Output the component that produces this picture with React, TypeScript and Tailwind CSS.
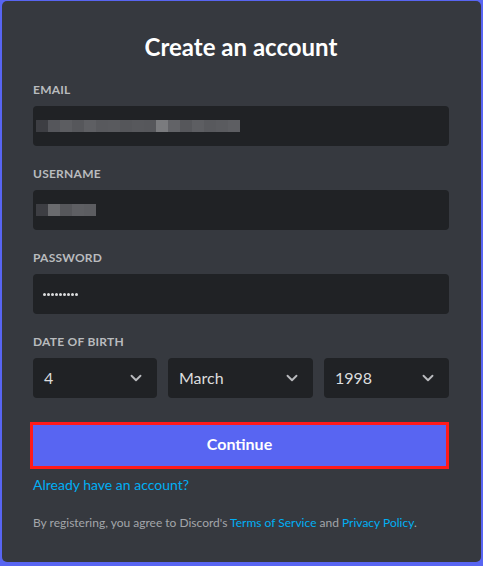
import { ChevronDown } from "lucide-react";

const emailBlocks = [
  "#3d3e43", "#55565b", "#5c5d61", "#56575b", "#5e5f63", "#58595d", "#595a5e", "#55565a",
  "#57585c", "#56575b", "#7a7b7e", "#626367", "#56575b", "#5d5e62", "#58595d", "#5a5b5f", "#5d5e62",
];
const userBlocks = ["#3d3e43", "#6a6b6e", "#56575b", "#5e5f63", "#5c5d61"];

function Label({ children }: { children: React.ReactNode }) {
  return (
    <div className="mb-2 h-4 text-[12px] font-bold leading-4 tracking-[0.02em] text-[#b9bbbe] uppercase">
      {children}
    </div>
  );
}

function Mosaic({ blocks }: { blocks: string[] }) {
  return (
    <div className="ml-[3px] flex h-3">
      {blocks.map((c, i) => (
        <span key={i} className="h-3 w-3" style={{ backgroundColor: c }} />
      ))}
    </div>
  );
}

function Select({ value, width }: { value: string; width: string }) {
  return (
    <div
      className={`flex h-10 items-center justify-between rounded-[4px] bg-[#202225] pl-[11px] pr-3 ${width}`}
    >
      <span className="text-[16px] text-[#dcddde]">{value}</span>
      <ChevronDown size={18} strokeWidth={2.5} className="text-[#b9bbbe]" />
    </div>
  );
}

export default function App() {
  return (
    <div
      className="h-[566px] w-[483px] overflow-hidden bg-[#5865f2] pl-[2px] pt-px"
      style={{ fontFamily: 'Lato, "Noto Sans", sans-serif' }}
    >
      <div className="h-[561px] w-[479px] rounded-[5px] bg-[#36393f] pl-[31px] pr-[32px] pt-[31px]">
        <h1 className="h-[30px] text-center text-[24px] font-bold leading-[30px] text-white">
          Create an account
        </h1>

        <div className="mt-5">
          <Label>Email</Label>
          <div className="flex h-10 items-center rounded-[4px] bg-[#202225]">
            <Mosaic blocks={emailBlocks} />
          </div>
        </div>

        <div className="mt-5">
          <Label>Username</Label>
          <div className="flex h-10 items-center rounded-[4px] bg-[#202225]">
            <Mosaic blocks={userBlocks} />
          </div>
        </div>

        <div className="mt-5">
          <Label>Password</Label>
          <div className="flex h-10 items-center gap-px rounded-[4px] bg-[#202225] pl-[10px]">
            {Array.from({ length: 9 }).map((_, i) => (
              <span key={i} className="h-[3px] w-[3px] rounded-full bg-[#dcddde]" />
            ))}
          </div>
        </div>

        <div className="mt-5">
          <Label>Date of birth</Label>
          <div className="flex gap-[11px]">
            <Select value="4" width="w-[124px]" />
            <Select value="March" width="w-[145px]" />
            <Select value="1998" width="w-[125px]" />
          </div>
        </div>

        <button className="-ml-[3px] mt-6 flex h-[47px] w-[419px] items-center justify-center border-[3px] border-[#ff1a1a] bg-[#5865f2] pb-[3px] text-[16px] font-bold text-white">
          Continue
        </button>

        <a className="mt-[7px] block text-[14px] leading-[18px] text-[#00aff4]">
          Already have an account?
        </a>

        <p className="mt-[21px] text-[12px] leading-4 text-[#a3a6aa]">
          By registering, you agree to Discord's{" "}
          <span className="text-[#00aff4]">Terms of Service</span> and{" "}
          <span className="text-[#00aff4]">Privacy Policy</span>.
        </p>
      </div>
    </div>
  );
}
